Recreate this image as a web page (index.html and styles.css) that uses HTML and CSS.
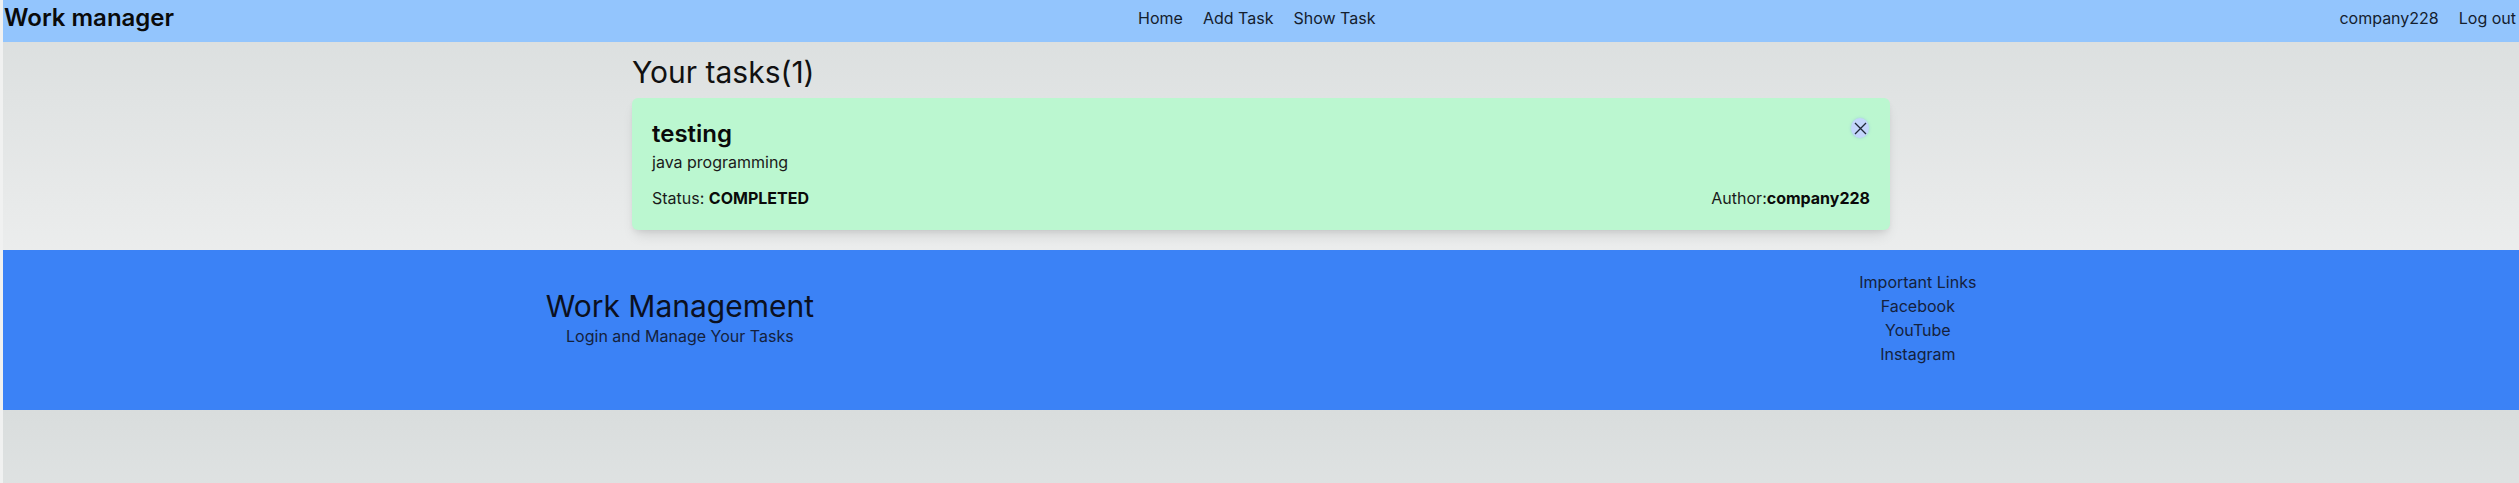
FILE: index.html
```html
<!DOCTYPE html>
<html lang="en">
<head>
<meta charset="utf-8">
<title>Work manager</title>
<link rel="stylesheet" href="styles.css">
</head>
<body>
<div class="app">
  <header class="topbar">
    <a class="brand" href="#">Work manager</a>
    <nav class="nav">
      <a href="#">Home</a>
      <a href="#">Add Task</a>
      <a href="#">Show Task</a>
    </nav>
    <nav class="nav">
      <a href="#">company228</a>
      <a href="#">Log out</a>
    </nav>
  </header>

  <main class="tasks">
    <h1 class="tasks-title">Your tasks(1)</h1>
    <div class="task-card">
      <div class="task-head">
        <h2 class="task-name">testing</h2>
        <button class="close-btn" aria-label="Delete">
          <svg width="13" height="13" viewBox="0 0 13 13"><path d="M1 1 L12 12 M12 1 L1 12" stroke="#1f2937" stroke-width="1.3" fill="none"/></svg>
        </button>
      </div>
      <p class="task-desc">java programming</p>
      <div class="task-foot">
        <p>Status: <b>COMPLETED</b></p>
        <p>Author:<b>company228</b></p>
      </div>
    </div>
  </main>

  <footer class="footer">
    <div class="footer-row">
      <div class="footer-col">
        <h2 class="footer-title">Work Management</h2>
        <p>Login and Manage Your Tasks</p>
      </div>
      <ul class="footer-col footer-links">
        <li>Important Links</li>
        <li><a href="#">Facebook</a></li>
        <li><a href="#">YouTube</a></li>
        <li><a href="#">Instagram</a></li>
      </ul>
    </div>
  </footer>
</div>
</body>
</html>
```

FILE: styles.css
```css
* { box-sizing: border-box; }

html, body {
  margin: 0;
  padding: 0;
}

body {
  background: #f0f1f1;
  font-family: Inter, "Liberation Sans", sans-serif;
  color: #111;
}

a { color: inherit; text-decoration: none; }

.app {
  margin-left: 3px;
  min-height: 100vh;
  background-image: linear-gradient(to bottom, #d9dddd, #f7f7f7);
  background-size: 100% 410px;
  background-repeat: repeat-y;
}

.topbar {
  height: 42px;
  padding: 0 3px 6px 1px;
  background: #93c5fd;
  display: flex;
  justify-content: space-between;
  align-items: center;
}

.brand {
  font-size: 24px;
  line-height: 32px;
  font-weight: 600;
  color: #0a0a0a;
}

.nav {
  display: flex;
  gap: 20px;
  font-size: 16px;
  line-height: 24px;
  color: #14202e;
}

.tasks {
  width: 50%;
  margin: 0 auto;
  padding: 12px 0 20px;
}

.tasks-title {
  margin: 0 0 8px;
  font-size: 30px;
  line-height: 36px;
  font-weight: 400;
  color: #111;
}

.task-card {
  background: #bbf7d0;
  border-radius: 6px;
  padding: 20px;
  box-shadow: 0 8px 14px -4px rgba(0,0,0,0.12), 0 3px 6px -2px rgba(0,0,0,0.08);
}

.task-head {
  display: flex;
  justify-content: space-between;
  align-items: flex-start;
}

.task-name {
  margin: 0;
  font-size: 24px;
  line-height: 32px;
  font-weight: 600;
  color: #0a0a0a;
}

.close-btn {
  width: 18px;
  height: 20px;
  margin-right: 1px;
  padding: 0;
  border: 0;
  border-radius: 50%;
  background: #c3d6fb;
  box-shadow: 0 0 3px rgba(120,150,230,0.4);
  display: flex;
  align-items: center;
  justify-content: center;
  cursor: pointer;
}

.task-desc {
  margin: 0;
  font-size: 16px;
  line-height: 24px;
  color: #1a1a1a;
}

.task-foot {
  margin-top: 12px;
  display: flex;
  justify-content: space-between;
  font-size: 16px;
  line-height: 24px;
  color: #1a1a1a;
}

.task-foot p { margin: 0; }
.task-foot b { font-weight: 700; color: #0a0a0a; }

.footer {
  height: 160px;
  padding: 20px;
  background: #3b82f6;
  color: #14213d;
}

.footer-row {
  display: flex;
  justify-content: space-around;
  align-items: center;
}

.footer-col {
  text-align: center;
  margin: 0;
  padding: 0;
  font-size: 16px;
  line-height: 24px;
}

.footer-col p { margin: 0; }

.footer-title {
  margin: 0;
  font-size: 30px;
  line-height: 36px;
  font-weight: 400;
  color: #0b1020;
}

.footer-links { list-style: none; }
```
